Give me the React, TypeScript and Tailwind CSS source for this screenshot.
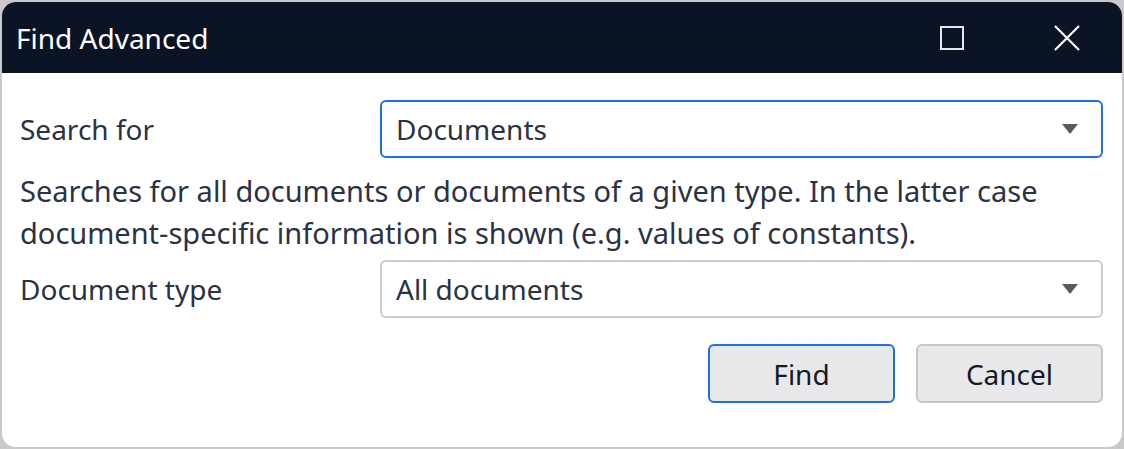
import React from 'react';

const font = { fontFamily: '"Noto Sans", "Open Sans", sans-serif' };

const Caret: React.FC = () => (
  <svg width="16" height="10" viewBox="0 0 16 10" className="shrink-0">
    <path d="M0 0 H16 L8 10 Z" fill="#575964" />
  </svg>
);

const Select: React.FC<{ value: string; focused?: boolean }> = ({ value, focused }) => (
  <div
    className={
      focused
        ? 'flex-1 h-[58px] flex items-center justify-between pl-[14px] pr-[23px] rounded-[6px] border-2 border-[#1f6fe5] bg-white'
        : 'flex-1 h-[58px] flex items-center justify-between pl-[14px] pr-[23px] rounded-[6px] border-2 border-[#cdcdd1] bg-white'
    }
  >
    <span className="text-[28px] leading-[36px] text-[#2b3242]">{value}</span>
    <Caret />
  </div>
);

const App: React.FC = () => {
  return (
    <div className="w-[1124px] h-[449px] bg-[#c9c9cb] p-[2px]" style={font}>
      <div className="w-full h-full rounded-[14px] overflow-hidden bg-white flex flex-col">
        {/* title bar */}
        <div className="h-[71px] bg-[#0b1425] flex items-center pl-[14px] pr-[42px]">
          <span className="text-[28px] leading-[36px] text-white flex-1">Find Advanced</span>
          <div className="w-[24px] h-[24px] border-[2px] border-[#e6e7ea] mr-[90px]" />
          <svg width="26" height="26" viewBox="0 0 26 26">
            <path d="M1 1 L25 25 M25 1 L1 25" stroke="#ffffff" strokeWidth="2.2" />
          </svg>
        </div>

        {/* body */}
        <div className="flex-1 flex flex-col pl-[18px] pr-[19px] pt-[27px]">
          <div className="flex items-center">
            <span className="w-[360px] text-[28px] leading-[36px] text-[#2b3242]">Search for</span>
            <Select value="Documents" focused />
          </div>
          <p className="mt-[12px] text-[29px] leading-[42px] text-[#2b3242] whitespace-nowrap">
            Searches for all documents or documents of a given type. In the latter case
            <br />
            document-specific information is shown (e.g. values of constants).
          </p>
          <div className="flex items-center mt-[6px]">
            <span className="w-[360px] text-[28px] leading-[36px] text-[#2b3242]">Document type</span>
            <Select value="All documents" />
          </div>
          <div className="flex justify-end gap-[21px] mt-[26px]">
            <button className="w-[187px] h-[59px] rounded-[6px] bg-[#e8e8eb] border-2 border-[#1f6fe5] text-[28px] leading-[36px] text-[#141a26]">
              Find
            </button>
            <button className="w-[187px] h-[59px] rounded-[6px] bg-[#e8e8eb] border-2 border-[#c6c6ca] text-[28px] leading-[36px] text-[#141a26]">
              Cancel
            </button>
          </div>
        </div>
      </div>
    </div>
  );
};

export default App;
